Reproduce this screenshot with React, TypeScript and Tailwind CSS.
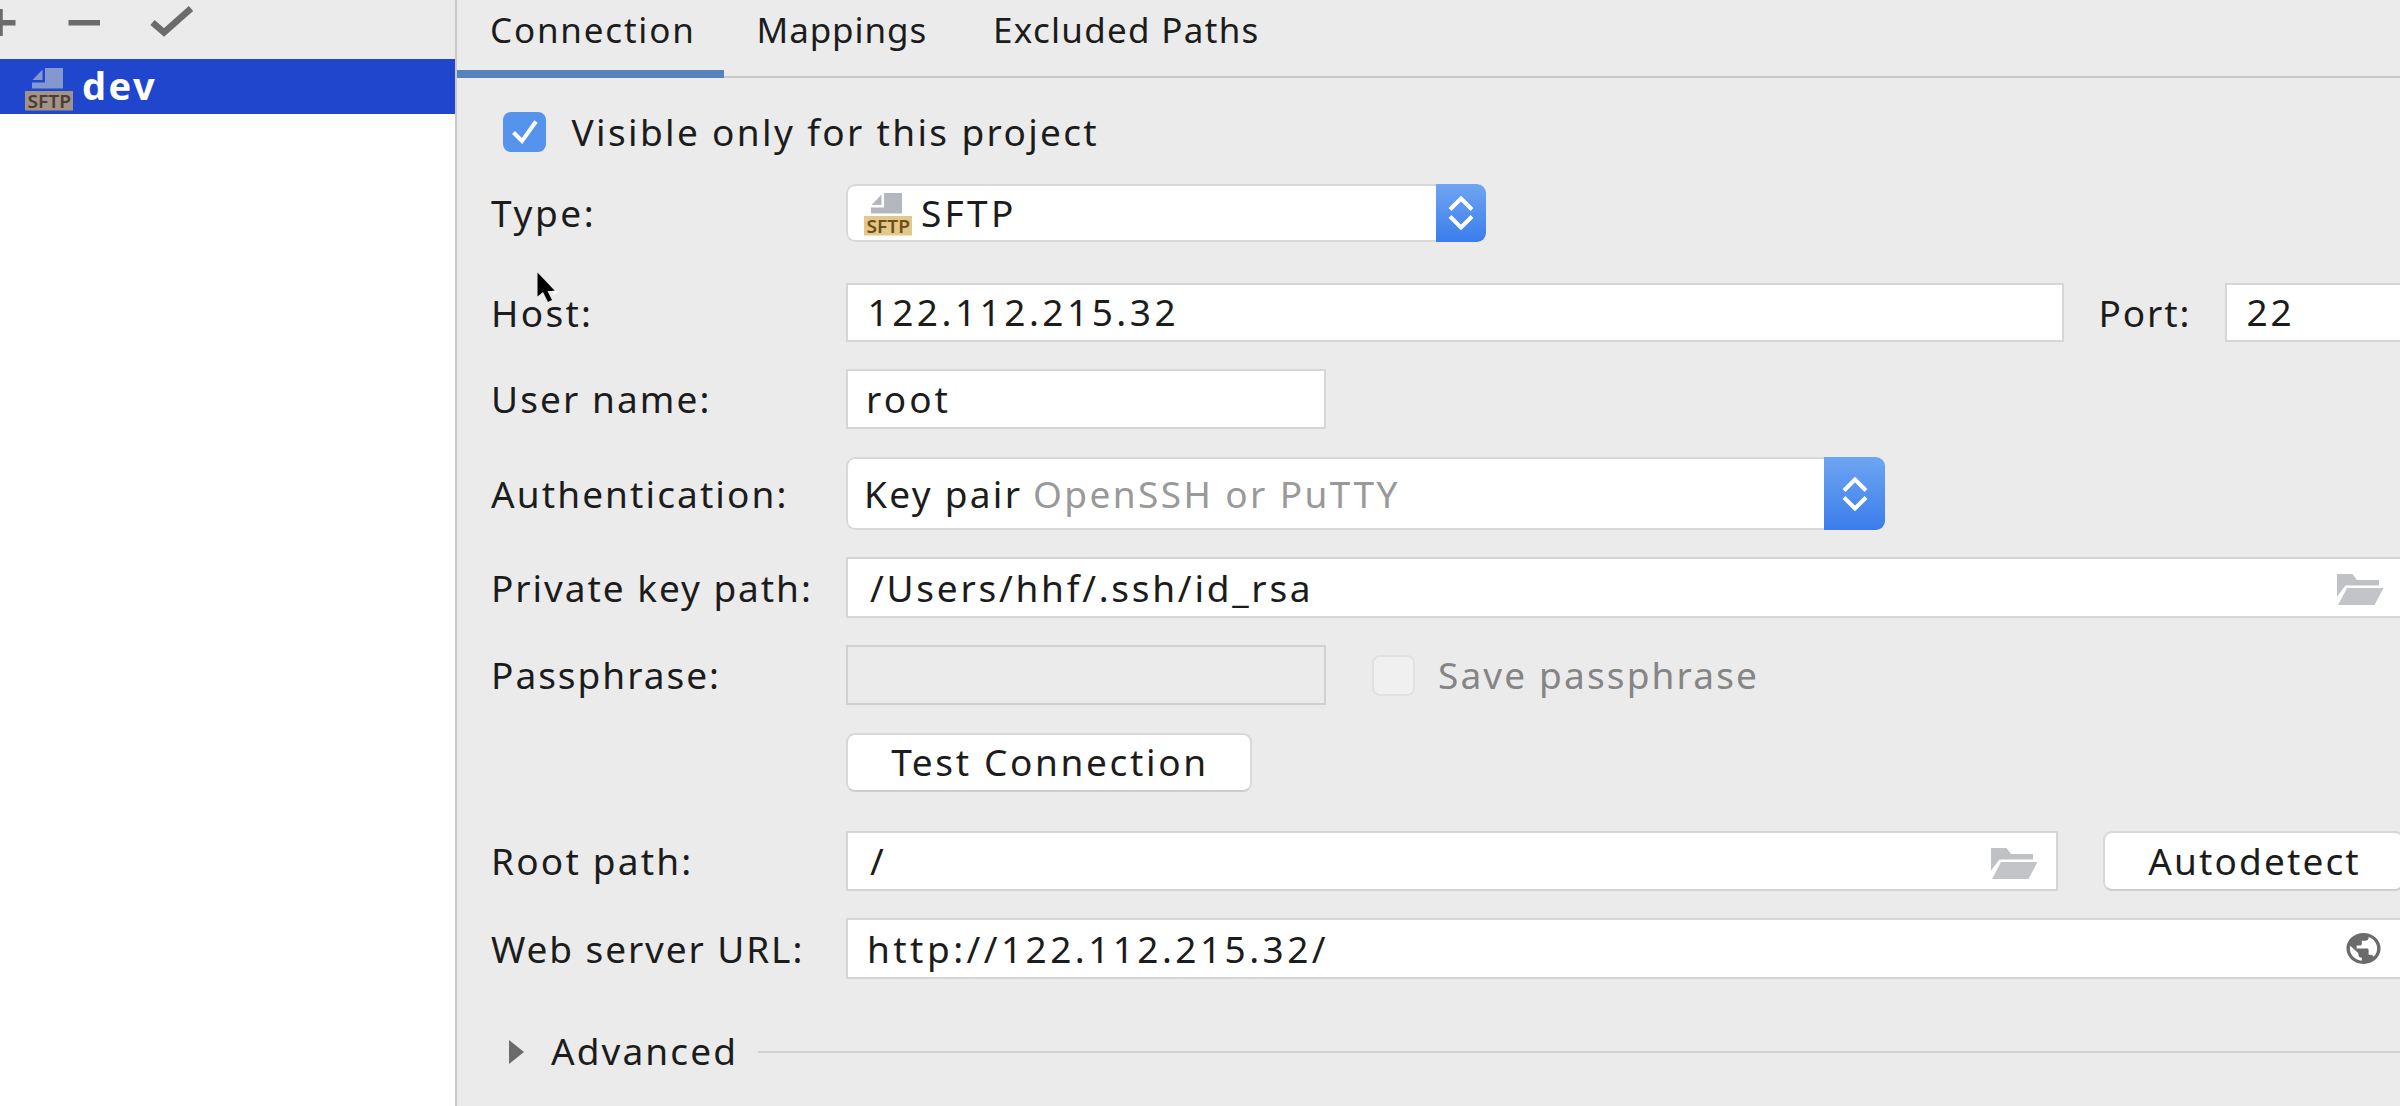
import type { ReactNode } from 'react';
import { MdPublic } from 'react-icons/md';

function SftpIcon({ className = '', selected = false }: { className?: string; selected?: boolean }) {
  const page = selected ? '#8298cf' : '#b4b7bd';
  return (
    <svg className={'shrink-0 overflow-visible ' + className} width="48" height="43" viewBox="0 0 48 43">
      <path d="M20 0h18v20.500H7V14.500h13z" fill={page} />
      <path d="M7.500 12L17.500 1.500V12z" fill={page} />
      <rect x="0" y="23" width="48" height="19.500" fill={selected ? '#a1938c' : '#e3c78c'} />
      <text
        x="2.500"
        y="39.500"
        textLength="43.500"
        lengthAdjust="spacingAndGlyphs"
        fontFamily="'Noto Sans', sans-serif"
        fontSize="18"
        fontWeight="600"
        letterSpacing="0"
        fill={selected ? '#4f3d2c' : '#6e5012'}
      >
        SFTP
      </text>
    </svg>
  );
}

function FolderIcon() {
  return (
    <svg className="mt-[4px] shrink-0" width="47" height="31" viewBox="0 0 47 31">
      <path d="M0 0h15.500l4.500 6h22v5.500H8.500L0 22.500z" fill="#c0c1c4" />
      <path d="M10 14h36.500l-9 17H1z" fill="#c3c4c7" />
    </svg>
  );
}

function Stepper({ className }: { className: string }) {
  return (
    <div className={'flex h-full items-center justify-center rounded-r-[9px] bg-linear-to-b from-[#6fa5f1] to-[#3a7cec] ' + className}>
      <svg className="h-[34px] w-[26px]" viewBox="0 0 26 34" fill="none" stroke="#fff" strokeWidth="4">
        <path d="M2 13.500L13 2.500 24 13.500M2 20.500l11 11L24 20.500" />
      </svg>
    </div>
  );
}

function Row({ label, className, children }: { label?: ReactNode; className: string; children: ReactNode }) {
  return (
    <div className={'flex shrink-0 items-center ' + className}>
      <div className="w-[355px] shrink-0 whitespace-nowrap">{label}</div>
      {children}
    </div>
  );
}

const field = 'flex h-full shrink-0 items-center border-2 border-[#d6d6d6] bg-white whitespace-nowrap ';
const combo = 'flex h-full shrink-0 items-center rounded-[9px] bg-white whitespace-nowrap ';
const button = 'flex h-full shrink-0 items-center justify-center rounded-[9px] border-2 border-[#d8d8d8] border-b-[#cdcdcd] bg-white pb-[1px] whitespace-nowrap ';

export default function App() {
  return (
    <div className="flex h-[1106px] w-[2400px] overflow-hidden bg-[#ebebeb] font-['Noto_Sans',sans-serif] text-[37px] leading-[52px] tracking-[2.1px] text-[#1c1c1c]">
      <aside className="flex w-[455px] shrink-0 flex-col bg-white">
        <div className="h-[59px] shrink-0 bg-[#ebebeb]">
          <svg width="455" height="58" viewBox="0 0 455 58" fill="none" stroke="#6b6b6b" strokeWidth="5.500">
            <path d="M-10 22.700H15.500M0 9v27M68.500 22.700H100" />
            <path d="M152.500 22.500L164 32.500 191 8.500" strokeWidth="6.500" />
          </svg>
        </div>
        <div className="flex h-[55px] shrink-0 items-center bg-[#2046ce] pl-[25px]">
          <SftpIcon selected className="mt-[5px]" />
          <span className="ml-[9px] pb-1 text-[38px] font-bold tracking-[2.5px] text-white">dev</span>
        </div>
      </aside>
      <div className="w-[2px] shrink-0 bg-[#c9c9c9]" />

      <main className="relative flex min-w-0 flex-1 flex-col overflow-hidden">
        <nav className="flex h-[78px] shrink-0 text-[35px] leading-[60px]">
          <div className="h-full w-[267px] shrink-0 border-b-[8px] border-[#5882bb] pl-[33px] tracking-[1.8px]">Connection</div>
          <div className="flex h-full flex-1 border-b-2 border-[#c8c8c8] whitespace-nowrap">
            <span className="w-[237px] pl-[32.500px] tracking-[0.9px]">Mappings</span>
            <span className="pl-[32px] tracking-[1.3px]">Excluded Paths</span>
          </div>
        </nav>

        <div className="flex flex-col pl-[34px]">
          <div className="mt-[34px] flex h-[40px] shrink-0 items-center">
            <div className="ml-[12px] flex h-[40px] w-[43px] items-center justify-center rounded-[8px] bg-[#5593ec]">
              <svg width="26" height="24" viewBox="0 0 26 24" fill="none" stroke="#fff" strokeWidth="4">
                <path d="M1.500 12.500l8.500 8.500L24 1.500" />
              </svg>
            </div>
            <span className="ml-[25.500px] whitespace-nowrap tracking-[2.35px]">Visible only for this project</span>
          </div>

          <Row label={<span className="tracking-[2.6px]">Type:</span>} className="mt-[32px] h-[58px]">
            <div className={combo + 'w-[640px]'}>
              <div className="flex h-full flex-1 items-center rounded-l-[9px] border-2 border-r-0 border-[#d8d8d8]">
                <SftpIcon className="mt-[2px] ml-[16px]" />
                <span className="ml-[9px] tracking-[3.3px]">SFTP</span>
              </div>
              <Stepper className="w-[50px]" />
            </div>
          </Row>

          <Row label={<span className="tracking-[2.3px]">Host:</span>} className="mt-[41px] h-[59px]">
            <div className={field + 'w-[1218px] pb-[1px] pl-[19.500px] tracking-[3.5px]'}>122.112.215.32</div>
            <span className="w-[161px] shrink-0 pl-[34.500px] tracking-[1.9px]">Port:</span>
            <div className={field + 'w-[260px] pb-[1px] pl-[19.500px] tracking-[2.8px]'}>22</div>
          </Row>

          <Row label="User name:" className="mt-[27px] h-[60px]">
            <div className={field + 'w-[480px] pl-[18px] tracking-[3.1px]'}>root</div>
          </Row>

          <Row label="Authentication:" className="mt-[28px] h-[73px]">
            <div className={combo + 'w-[1039px]'}>
              <div className="flex h-full flex-1 items-center rounded-l-[9px] border-2 border-r-0 border-[#d8d8d8] pl-[16px]">
                <span className="w-[169px] tracking-[2.3px]">Key pair</span>
                <span className="tracking-[2.4px] text-[#999]">OpenSSH or PuTTY</span>
              </div>
              <Stepper className="w-[61px]" />
            </div>
          </Row>

          <Row label={<span className="tracking-[1.95px]">Private key path:</span>} className="mt-[27px] h-[61px]">
            <div className={field + 'w-[1570px] pl-[22px] tracking-[2.75px]'}>
              <span className="w-[1467px]">/Users/hhf/.ssh/id_rsa</span>
              <FolderIcon />
            </div>
          </Row>

          <Row label={<span className="tracking-[2px]">Passphrase:</span>} className="mt-[27px] h-[60px]">
            <div className="h-full w-[480px] shrink-0 border-2 border-[#d0d0d0]" />
            <div className="ml-[46px] h-[41px] w-[43px] shrink-0 rounded-[8px] border-2 border-[#e1e1e1] bg-[#f0f0f0]" />
            <span className="ml-[23px] whitespace-nowrap tracking-[2.15px] text-[#858585]">Save passphrase</span>
          </Row>

          <Row className="mt-[28px] h-[59px]">
            <div className={button + 'w-[406px] pl-[2px] tracking-[2.65px]'}>Test Connection</div>
          </Row>

          <Row label={<span className="tracking-[2.2px]">Root path:</span>} className="mt-[39px] h-[60px]">
            <div className={field + 'w-[1212px] pl-[22px]'}>
              <span className="w-[1121px]">/</span>
              <FolderIcon />
            </div>
            <div className={button + 'ml-[45px] w-[301px] pl-[2px] tracking-[2.15px]'}>Autodetect</div>
          </Row>

          <Row label={<span className="tracking-[1.9px]">Web server URL:</span>} className="mt-[27px] h-[61px]">
            <div className={field + 'w-[1570px] pl-[19px] tracking-[3.45px]'}>
              <span className="w-[1476px]">http://122.112.215.32/</span>
              <MdPublic className="h-[37px] w-[41px] shrink-0 text-[#6b6b6b]" preserveAspectRatio="none" />
            </div>
          </Row>

          <div className="mt-[48px] flex h-[50px] shrink-0 items-center">
            <svg className="ml-[18px] shrink-0" width="15" height="24" viewBox="0 0 15 24">
              <path d="M0 0l15 12L0 24z" fill="#6b6b6b" />
            </svg>
            <span className="ml-[27px] pb-[2px]">Advanced</span>
            <div className="ml-[20px] h-[2px] flex-1 bg-[#d2d2d2]" />
          </div>
        </div>

        <svg className="absolute top-[271px] left-[79px] overflow-visible" width="24" height="32" viewBox="0 0 24 32">
          <path d="M1.500 1.500v24l5.500-4.500 5 10 4-2-4.500-9H19z" fill="#000" />
          <path d="M17 24l4-3.500h-5" fill="none" stroke="#fff" strokeWidth="1.500" />
        </svg>
      </main>
    </div>
  );
}
